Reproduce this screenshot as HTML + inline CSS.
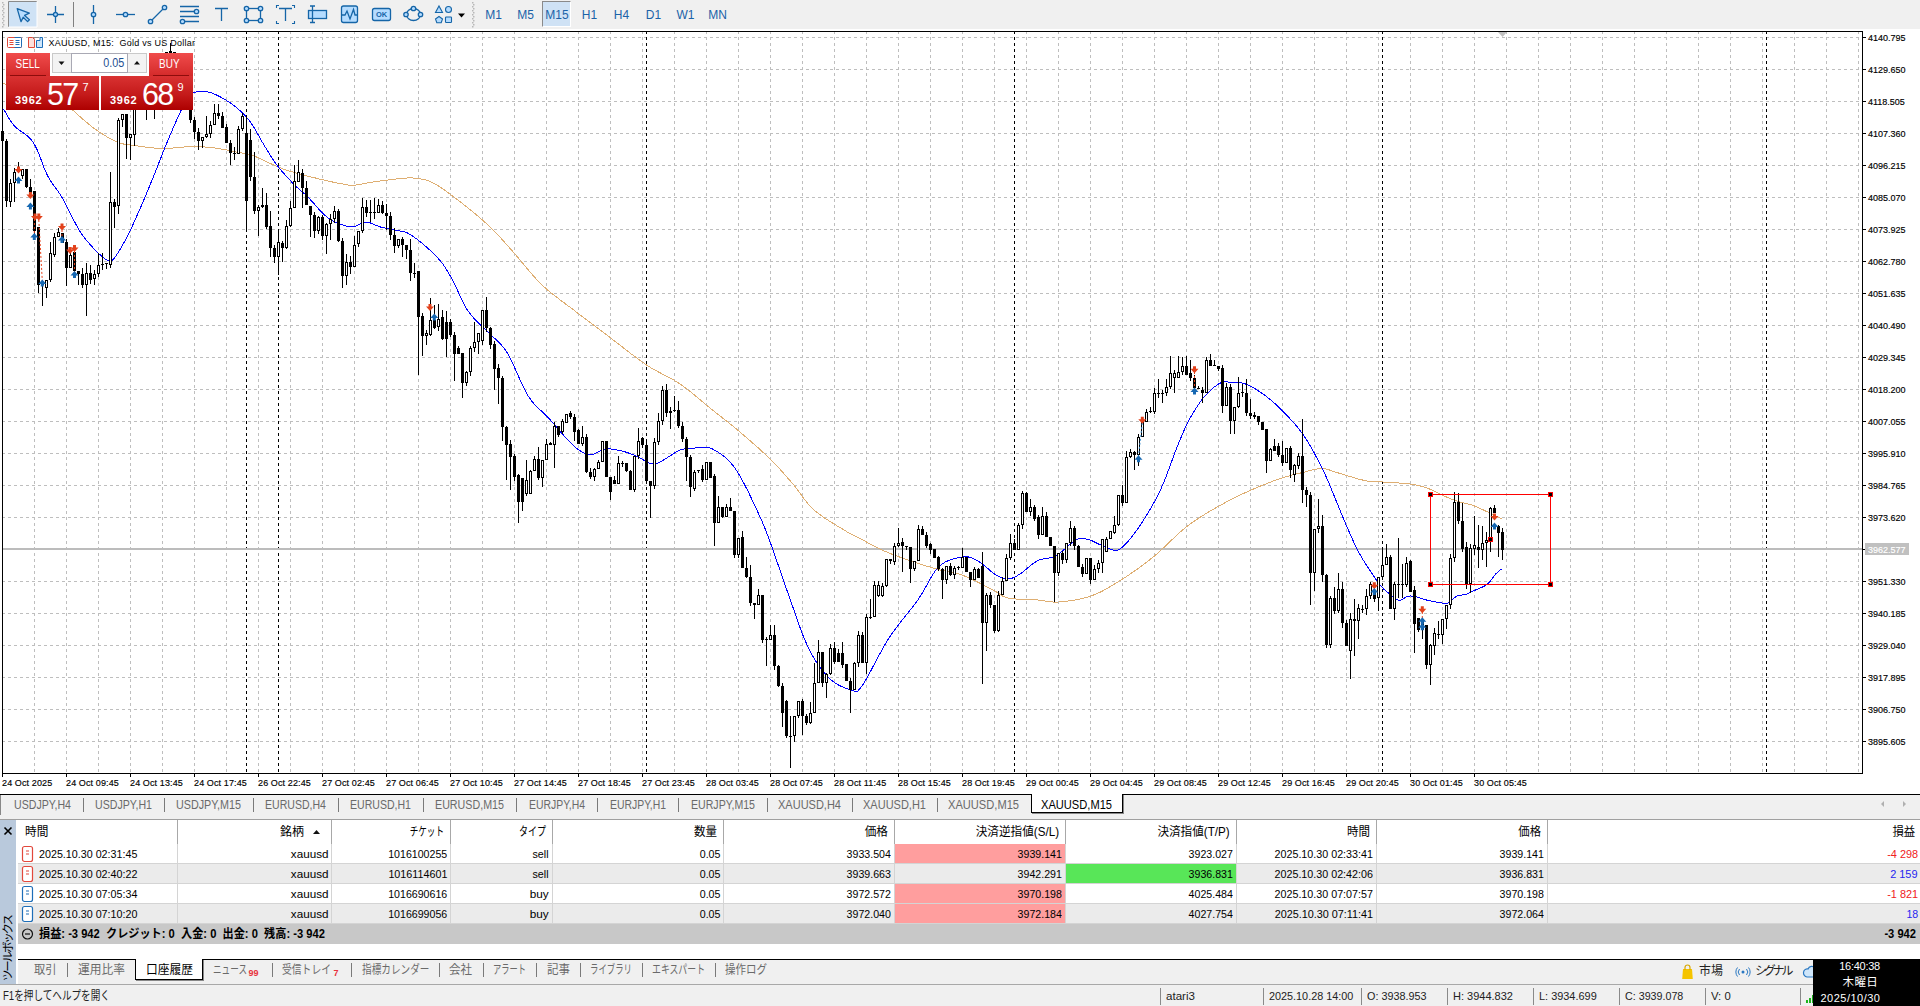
<!DOCTYPE html><html lang="ja"><head><meta charset="utf-8"><title>XAUUSD,M15</title><style>

*{box-sizing:border-box;margin:0;padding:0}
html,body{width:1920px;height:1006px;overflow:hidden;background:#f0f0f0}
body{position:relative;font-family:"Liberation Sans","Noto Sans CJK JP",sans-serif;font-size:12px;color:#000}
.abs{position:absolute}
.t{position:absolute;white-space:nowrap;line-height:1}
#toolbar{position:absolute;left:0;top:0;width:1920px;height:29px;background:#f0f0f0}
.tf{position:absolute;top:0;height:30px;line-height:31px;font-size:12px;color:#1b62a8;text-align:center;width:32px}
/* one click panel */
#oct{position:absolute;left:0;top:0}
.redtop{position:absolute;background:linear-gradient(#f04c4c,#d42a2a);color:#fff;font-size:12px;text-align:center}
.redbot{position:absolute;background:linear-gradient(#d93232,#c41a1a 55%,#ad0000);color:#fff}
/* chart tabs */
#ctabs{position:absolute;left:0;top:795px;width:1920px;height:24px;background:#f0f0f0}
.ct{position:absolute;top:0;height:19px;line-height:20px;font-size:12px;color:#6a6a6a;white-space:nowrap;transform-origin:left center}
.sep{position:absolute;width:1px;background:#7a7a7a}
/* terminal */
#term{position:absolute;left:0;top:819px;width:1920px;height:166px;background:#fff;border-top:1px solid #a0a0a0}
#side{position:absolute;left:0;top:0;width:16px;height:165px;background:#b9c9dc}
.row{position:absolute;left:18px;width:1902px;height:20px}
.cell{position:absolute;top:0;height:19px;line-height:21.5px;font-size:11px;white-space:nowrap;text-align:right;padding-right:3px;border-right:1px solid #d4d4d4}
.cell span{display:inline-block;transform:scaleX(.968);transform-origin:right center}
.hcell{position:absolute;top:0;height:24px;line-height:25px;font-size:12px;white-space:nowrap;text-align:right;padding-right:6px;border-right:1px solid #a8a8a8}
.btab{position:absolute;top:0;height:20px;line-height:20px;font-size:12px;color:#6a6a6a;white-space:nowrap}
#status{position:absolute;left:0;top:984px;width:1920px;height:22px;background:#f0f0f0;border-top:1px solid #a8a8a8}
.st{position:absolute;top:0;height:21px;line-height:23px;font-size:11px;white-space:nowrap;color:#222;transform:scaleX(.98);transform-origin:left center}

</style></head><body>
<svg id="chart" width="1920" height="795" viewBox="0 0 1920 795" style="position:absolute;left:0;top:0">
<rect x="0" y="29" width="1920" height="766" fill="#fff"/>
<path d="M2 37.5H1862M2 69.5H1862M2 101.5H1862M2 133.5H1862M2 165.5H1862M2 197.5H1862M2 229.5H1862M2 261.5H1862M2 293.5H1862M2 325.5H1862M2 357.5H1862M2 389.5H1862M2 421.5H1862M2 453.5H1862M2 485.5H1862M2 517.5H1862M2 549.5H1862M2 581.5H1862M2 613.5H1862M2 645.5H1862M2 677.5H1862M2 709.5H1862M2 741.5H1862" stroke="#bebebe" stroke-width="1" stroke-dasharray="3 3" fill="none" shape-rendering="crispEdges"/>
<path d="M34.5 31V773M66.5 31V773M98.5 31V773M130.5 31V773M162.5 31V773M194.5 31V773M226.5 31V773M258.5 31V773M290.5 31V773M322.5 31V773M354.5 31V773M386.5 31V773M418.5 31V773M450.5 31V773M482.5 31V773M514.5 31V773M546.5 31V773M578.5 31V773M610.5 31V773M642.5 31V773M674.5 31V773M706.5 31V773M738.5 31V773M770.5 31V773M802.5 31V773M834.5 31V773M866.5 31V773M898.5 31V773M930.5 31V773M962.5 31V773M994.5 31V773M1026.5 31V773M1058.5 31V773M1090.5 31V773M1122.5 31V773M1154.5 31V773M1186.5 31V773M1218.5 31V773M1250.5 31V773M1282.5 31V773M1314.5 31V773M1346.5 31V773M1378.5 31V773M1410.5 31V773M1442.5 31V773M1474.5 31V773M1506.5 31V773M1538.5 31V773M1570.5 31V773M1602.5 31V773M1634.5 31V773M1666.5 31V773M1698.5 31V773M1730.5 31V773M1762.5 31V773M1794.5 31V773M1826.5 31V773M1858.5 31V773" stroke="#bebebe" stroke-width="1" stroke-dasharray="3 3" fill="none" shape-rendering="crispEdges"/>
<path d="M246.5 31V773M278.5 31V773M646.5 31V773M1014.5 31V773M1382.5 31V773M1766.5 31V773" stroke="#000" stroke-width="1" stroke-dasharray="3 3" fill="none" shape-rendering="crispEdges"/>
<rect x="3" y="548" width="1859" height="2" fill="#bcbcbc" shape-rendering="crispEdges"/>
<path d="M2.0 83.0L3.8 83.5L6.0 84.2L8.7 84.9L11.6 85.7L14.8 86.6L18.3 87.6L21.8 88.6L25.4 89.7L29.1 90.8L32.6 91.8L36.1 92.9L39.3 94.0L42.3 95.0L45.0 96.0L48.8 97.6L52.5 99.2L56.0 101.0L59.4 102.7L62.5 104.5L65.3 106.1L67.9 107.6L70.1 108.9L72.0 110.0L74.5 111.5L76.0 113.3L78.3 115.3L81.3 117.8L84.7 120.8L88.3 123.8L92.0 126.8L95.5 129.4L98.5 131.5L101.6 133.5L104.8 135.5L108.0 137.4L111.1 139.2L114.2 140.7L117.0 142.0L120.5 143.3L123.5 144.0L126.4 144.5L129.7 144.9L133.7 145.4L136.3 145.8L139.2 146.2L142.2 146.6L145.4 147.1L148.7 147.5L152.1 147.8L155.4 148.2L158.8 148.4L162.0 148.5L165.2 148.5L168.5 148.4L171.8 148.1L175.1 147.8L178.4 147.5L181.7 147.2L184.9 146.9L188.0 146.7L191.0 146.6L194.7 146.6L198.2 146.7L201.6 146.8L204.9 147.0L208.1 147.3L211.4 147.6L214.8 148.0L218.3 148.5L221.9 149.1L225.5 149.8L229.1 150.5L232.6 151.2L235.8 151.9L238.7 152.5L242.7 153.2L245.9 153.7L249.0 154.3L253.0 155.6L256.0 156.8L259.3 158.3L262.9 159.9L266.6 161.7L270.2 163.4L273.7 165.0L276.8 166.4L280.4 167.9L283.5 169.1L286.4 170.1L289.6 171.1L293.6 172.3L296.2 173.1L299.1 173.9L302.3 174.7L305.5 175.5L308.8 176.4L312.1 177.2L315.4 178.0L318.5 178.8L321.5 179.5L325.2 180.4L328.9 181.2L332.5 182.0L336.0 182.7L339.2 183.4L342.2 183.9L344.7 184.4L348.4 185.1L350.6 185.4L353.7 185.3L356.5 184.9L359.7 184.4L363.3 183.7L367.2 182.9L371.6 182.2L374.4 181.8L377.4 181.4L380.7 180.9L384.2 180.5L387.7 180.0L391.1 179.6L394.3 179.2L397.3 178.9L400.0 178.6L404.0 178.3L407.3 178.0L410.2 177.9L413.0 178.0L416.0 178.3L419.2 178.7L422.4 179.3L425.6 180.0L428.9 181.1L432.4 182.6L435.4 184.2L438.4 186.0L441.5 188.0L444.8 190.3L448.3 192.8L452.0 195.6L454.7 197.6L457.7 199.9L460.8 202.3L464.0 204.8L467.2 207.3L470.4 209.9L473.5 212.4L476.4 214.8L479.0 217.0L482.5 220.1L485.7 222.9L488.6 225.6L491.3 228.3L494.1 231.1L497.0 234.0L500.4 237.6L503.6 241.1L506.9 244.9L510.6 249.0L514.8 253.8L517.4 256.8L520.2 260.2L523.1 263.7L526.2 267.4L529.4 271.2L532.6 275.0L536.0 278.7L539.5 282.3L543.0 285.8L545.7 288.3L548.6 290.8L551.6 293.3L554.7 295.7L557.8 298.1L560.9 300.5L564.1 302.8L567.2 305.2L570.3 307.4L573.3 309.7L576.2 311.9L579.0 314.0L582.5 316.7L585.9 319.3L589.1 321.7L592.2 324.1L595.3 326.4L598.4 328.8L601.7 331.2L605.1 333.8L608.7 336.5L611.6 338.7L614.6 341.0L617.6 343.4L620.8 345.8L624.0 348.3L627.3 350.9L630.5 353.4L633.8 355.8L637.0 358.2L640.2 360.5L643.3 362.7L646.3 364.8L649.5 366.9L652.7 368.8L655.9 370.6L659.0 372.2L662.1 373.9L665.2 375.5L668.2 377.0L671.2 378.7L674.2 380.3L677.1 382.1L680.0 384.0L683.1 386.2L686.2 388.5L689.3 390.8L692.3 393.3L695.2 395.7L698.2 398.2L701.1 400.6L704.1 403.1L707.0 405.6L710.0 408.0L713.0 410.4L716.0 412.8L719.0 415.1L722.0 417.5L725.0 419.8L728.0 422.2L731.0 424.6L734.0 427.0L737.0 429.5L740.0 432.0L743.3 434.9L746.7 437.8L750.2 440.8L753.6 443.8L757.0 446.8L760.3 449.8L763.5 452.8L766.7 455.8L769.7 458.7L773.4 462.4L776.9 466.0L780.3 469.6L783.5 473.2L786.7 476.8L789.8 480.4L793.0 484.0L796.0 487.7L798.8 491.5L801.5 495.3L804.3 499.1L807.2 502.9L810.4 506.5L814.0 510.0L816.6 512.2L819.6 514.4L822.7 516.7L826.0 518.9L829.4 521.1L832.7 523.2L836.0 525.2L839.2 527.1L842.1 528.8L844.7 530.4L847.0 531.8L851.1 534.2L853.2 535.3L855.2 536.2L859.0 538.0L861.2 539.1L863.6 540.4L866.2 541.9L869.0 543.4L872.0 545.0L875.1 546.6L878.4 548.2L881.8 549.9L885.4 551.5L889.0 553.0L891.7 554.1L894.7 555.2L897.8 556.4L901.0 557.5L904.3 558.7L907.6 559.8L911.0 561.0L914.4 562.1L917.7 563.2L921.0 564.3L924.2 565.3L927.3 566.3L930.3 567.2L933.0 568.0L936.6 569.0L939.9 569.9L943.0 570.6L946.0 571.2L948.9 571.7L951.7 572.3L954.4 572.9L957.2 573.6L960.1 574.4L963.0 575.4L966.1 576.6L969.2 578.0L972.5 579.5L975.7 581.0L978.9 582.7L982.1 584.3L985.1 585.9L988.0 587.4L990.6 588.8L993.0 590.0L996.7 592.1L999.4 594.0L1001.6 595.5L1004.3 596.9L1008.0 598.0L1010.4 598.4L1013.2 598.8L1016.2 599.0L1019.4 599.2L1022.6 599.4L1026.0 599.5L1029.2 599.6L1032.4 599.7L1035.3 599.8L1038.0 600.0L1041.8 600.4L1045.1 601.0L1048.2 601.5L1051.2 601.9L1054.6 602.1L1058.6 602.0L1061.4 601.8L1064.4 601.5L1067.5 601.1L1070.8 600.7L1074.2 600.1L1077.6 599.5L1081.1 598.8L1084.5 598.0L1087.8 597.0L1091.0 596.0L1094.1 594.8L1097.1 593.6L1100.1 592.2L1103.0 590.7L1106.0 589.1L1108.9 587.4L1111.9 585.7L1114.9 583.8L1117.9 581.9L1121.0 580.0L1124.2 578.0L1127.4 575.9L1130.6 573.7L1133.9 571.5L1137.2 569.2L1140.5 566.8L1143.8 564.3L1147.1 561.8L1150.4 559.2L1153.7 556.6L1157.0 553.8L1160.3 550.9L1163.5 547.8L1166.8 544.7L1170.1 541.5L1173.4 538.4L1176.7 535.3L1180.0 532.3L1183.2 529.4L1186.5 526.8L1189.8 524.3L1193.1 522.0L1196.4 519.7L1199.6 517.6L1202.9 515.5L1206.2 513.5L1209.4 511.5L1212.7 509.6L1215.9 507.8L1219.0 506.0L1222.1 504.3L1225.2 502.6L1228.2 501.0L1231.2 499.4L1234.2 497.9L1237.1 496.5L1240.1 495.1L1243.0 493.7L1246.0 492.4L1249.0 491.0L1252.0 489.7L1255.1 488.3L1258.2 487.0L1261.3 485.7L1264.4 484.5L1267.5 483.3L1270.5 482.1L1273.4 481.0L1276.3 480.0L1279.0 479.0L1282.8 477.8L1286.4 476.7L1289.8 475.7L1293.2 474.8L1296.4 474.0L1299.6 473.2L1302.7 472.5L1306.2 471.6L1309.6 470.7L1312.8 469.9L1315.9 469.2L1319.0 468.7L1322.0 468.6L1325.3 468.9L1328.3 469.6L1331.3 470.6L1334.6 471.8L1338.5 473.0L1341.4 473.8L1344.6 474.8L1348.1 475.9L1351.7 477.0L1355.2 478.1L1358.7 479.1L1362.0 479.9L1365.0 480.6L1368.4 481.2L1371.3 481.5L1374.0 481.7L1376.6 481.7L1379.6 481.8L1383.0 482.0L1385.7 482.2L1388.6 482.4L1391.7 482.5L1394.9 482.7L1398.2 482.9L1401.4 483.2L1404.5 483.4L1407.4 483.7L1410.0 484.0L1414.1 484.6L1417.6 485.3L1420.8 486.1L1423.8 486.9L1427.0 488.0L1430.3 489.3L1433.5 490.8L1436.7 492.4L1439.9 494.0L1443.0 495.5L1446.1 496.8L1449.1 498.1L1452.0 499.3L1455.0 500.4L1458.0 501.4L1461.0 502.3L1464.0 503.0L1467.0 503.7L1470.0 504.5L1473.0 505.4L1476.7 506.9L1480.3 508.5L1484.0 510.3L1487.6 512.0L1491.6 513.9L1495.7 515.9L1499.4 517.7L1502.0 519.0" stroke="#deae72" stroke-width="1" fill="none" shape-rendering="crispEdges"/>
<path d="M3.6 109.0L6.1 113.4L9.7 119.6L14.3 125.8L17.1 128.4L20.2 130.8L23.6 133.1L27.1 135.7L30.4 138.7L33.4 142.5L37.3 150.0L40.8 159.0L44.2 168.1L47.7 176.0L51.2 181.9L54.6 186.6L58.1 191.3L62.0 197.4L64.9 202.7L68.0 208.7L71.2 215.2L74.5 221.6L77.8 227.7L81.0 233.0L84.3 237.6L87.7 241.8L91.1 245.7L94.4 249.2L97.4 252.2L100.0 254.7L105.1 259.2L108.6 260.6L111.2 261.2L114.5 258.0L117.4 253.7L120.9 248.0L124.9 241.0L129.0 233.0L131.9 226.9L135.0 220.2L138.2 212.9L141.5 205.3L144.8 197.6L148.0 190.0L151.2 182.1L154.6 173.8L157.9 165.4L161.1 157.2L164.2 149.4L167.0 142.5L170.8 133.5L174.2 125.6L177.2 118.7L180.0 112.7L184.3 103.3L188.0 97.0L191.5 93.5L195.7 92.0L198.7 91.5L202.1 91.3L205.9 91.5L210.0 92.4L212.9 93.4L216.2 94.8L219.5 96.5L222.8 98.3L226.0 100.2L229.0 102.0L233.0 104.8L236.8 107.8L240.2 110.9L243.4 113.9L247.0 117.7L250.0 121.5L253.0 125.8L256.0 130.8L259.0 136.3L262.5 142.5L265.7 147.8L269.2 153.6L272.9 159.5L276.8 165.0L280.0 169.1L283.5 173.1L286.9 177.0L290.4 180.6L293.6 184.0L297.2 187.5L300.6 190.4L304.1 193.4L307.9 197.0L310.8 200.1L314.0 203.6L317.2 207.3L320.5 211.0L323.8 214.3L326.8 217.0L330.3 219.5L333.7 221.4L337.0 222.8L340.2 224.0L343.0 225.0L346.9 226.2L350.2 226.8L353.7 226.6L356.6 225.7L359.6 224.1L362.7 222.6L366.0 222.0L369.4 222.6L373.0 224.0L376.7 225.6L380.5 227.0L383.7 227.8L387.1 228.6L390.5 229.2L393.7 229.9L396.6 230.5L400.5 231.1L403.7 231.6L407.4 233.0L410.6 234.8L414.1 237.1L417.8 239.8L421.7 243.0L425.1 245.9L428.9 249.2L432.7 252.7L436.3 256.4L439.6 260.0L443.1 264.4L446.1 268.9L449.0 273.7L452.0 279.0L455.2 285.4L458.5 292.6L461.7 299.7L464.7 305.7L468.3 311.4L471.7 315.8L475.4 320.0L478.6 323.3L481.9 326.4L485.5 329.7L489.4 333.5L492.7 336.6L496.1 339.7L499.7 343.2L503.5 347.4L507.3 352.9L510.6 359.0L514.0 366.3L517.6 374.3L521.1 382.3L524.7 389.7L528.2 396.0L531.7 401.0L535.2 405.1L538.8 408.7L542.3 411.9L545.7 415.1L549.0 418.5L552.2 422.1L555.4 425.8L558.5 429.5L561.5 432.9L564.4 436.2L567.0 439.0L570.4 442.6L573.4 445.5L576.2 447.9L579.0 450.0L582.8 452.5L586.6 454.2L590.8 454.8L594.3 453.9L598.1 452.1L601.9 450.2L605.7 449.0L609.4 448.8L613.2 449.2L616.9 449.9L620.6 450.7L624.3 451.6L627.9 452.8L631.6 454.1L635.5 455.7L638.9 457.4L642.6 459.5L646.3 461.6L650.0 463.3L653.4 464.0L657.4 463.3L661.2 461.5L664.9 459.1L668.3 457.0L672.3 454.5L676.0 452.0L680.0 450.0L682.8 449.2L685.8 448.7L688.8 448.4L691.9 448.2L695.0 448.0L698.0 447.7L700.9 447.3L703.8 447.0L706.8 447.2L710.0 448.0L712.9 449.2L716.0 450.9L719.1 452.9L722.3 455.1L725.3 457.5L728.0 460.0L731.5 463.7L734.6 467.6L737.6 472.2L741.0 478.0L744.2 483.9L747.7 490.7L751.3 498.1L754.7 505.3L757.8 512.0L761.7 520.6L765.1 528.6L769.4 540.0L772.3 548.2L775.7 557.8L779.3 568.2L783.0 579.0L786.6 589.4L790.0 599.0L793.1 607.8L796.1 616.4L799.0 624.8L801.9 632.7L804.9 640.1L808.0 647.0L810.8 652.5L813.7 657.7L816.7 662.5L819.7 666.9L822.8 671.0L825.9 674.7L829.0 678.0L832.2 680.9L835.6 683.3L839.1 685.3L842.6 687.0L845.8 688.3L848.8 689.3L851.4 690.0L855.2 691.5L857.7 691.2L862.0 686.0L864.3 682.5L866.8 678.1L869.7 672.9L872.7 667.2L875.9 661.1L879.2 655.0L882.5 648.9L885.8 643.2L889.0 638.0L892.2 633.2L895.6 628.6L899.0 624.1L902.4 619.7L905.9 615.4L909.2 611.2L912.5 607.1L915.6 603.0L918.5 599.0L922.4 592.9L925.9 586.8L929.1 580.9L932.2 575.4L935.5 570.5L939.0 566.5L941.9 564.1L945.0 562.2L948.1 560.7L951.3 559.5L954.5 558.6L957.6 557.9L960.4 557.4L963.0 557.0L966.5 556.8L969.5 557.1L972.2 558.0L975.0 559.3L978.0 561.0L980.9 562.9L984.0 565.3L987.2 568.0L990.3 570.7L993.3 573.1L996.0 575.0L999.4 576.9L1002.4 578.2L1005.1 578.9L1008.0 579.0L1010.9 578.6L1013.6 577.6L1016.6 576.1L1020.0 574.0L1022.7 572.1L1025.6 569.8L1028.6 567.2L1031.8 564.6L1035.0 562.3L1038.0 560.5L1041.5 559.2L1044.9 558.6L1048.3 558.2L1051.9 557.5L1055.6 556.0L1059.0 553.8L1062.7 550.8L1066.4 547.5L1070.1 544.3L1073.5 541.5L1076.5 539.6L1080.1 538.3L1083.1 538.3L1085.7 538.9L1088.5 539.6L1092.3 540.9L1096.0 542.8L1100.0 544.7L1103.3 546.2L1106.9 547.8L1110.3 549.2L1113.4 550.0L1117.5 550.4L1122.0 547.6L1124.8 544.9L1128.0 541.4L1131.5 537.2L1135.2 532.4L1139.0 527.0L1141.8 522.7L1144.8 518.1L1147.9 513.1L1151.0 507.9L1154.1 502.4L1157.1 496.7L1160.0 491.0L1163.8 482.3L1167.5 472.8L1171.1 463.1L1174.4 454.0L1177.5 446.0L1181.8 435.6L1185.4 427.3L1189.4 419.4L1192.9 413.3L1196.5 407.4L1200.3 401.9L1204.0 397.0L1207.1 393.6L1210.3 390.5L1213.4 387.7L1216.4 385.5L1219.0 383.7L1222.2 382.1L1224.7 381.9L1228.0 382.0L1230.8 382.0L1234.1 382.1L1237.6 382.3L1241.2 382.8L1244.6 383.7L1247.9 384.9L1251.1 386.5L1254.3 388.3L1257.6 390.3L1261.0 392.6L1263.8 394.6L1266.7 396.7L1269.5 399.0L1272.5 401.5L1275.7 404.3L1279.0 407.5L1282.1 410.6L1285.5 414.0L1289.0 417.7L1292.6 421.5L1296.1 425.5L1299.5 429.7L1302.7 434.0L1306.2 439.3L1309.7 444.9L1313.0 450.7L1316.1 456.6L1319.2 462.4L1322.0 468.0L1325.9 476.2L1329.4 484.3L1332.6 492.1L1335.7 499.7L1339.6 509.2L1343.3 518.2L1347.0 527.0L1350.9 535.7L1354.7 544.2L1358.6 552.0L1362.4 558.8L1366.2 564.8L1370.0 570.6L1373.9 576.4L1377.8 582.0L1381.4 586.6L1384.6 589.9L1387.6 592.4L1390.6 594.6L1393.7 597.2L1396.8 599.5L1399.7 600.7L1403.2 598.9L1406.6 596.4L1410.5 596.0L1414.6 596.4L1418.3 597.5L1422.6 599.0L1425.6 599.8L1429.1 600.6L1432.6 601.4L1436.0 602.0L1440.1 602.8L1444.0 603.3L1447.7 603.0L1451.0 601.1L1453.9 598.2L1456.9 596.0L1460.1 595.2L1463.3 594.9L1466.0 594.6L1467.9 593.7L1470.6 592.0L1473.2 590.9L1476.5 589.6L1480.1 588.1L1483.7 586.5L1486.6 584.7L1490.3 581.2L1493.2 577.3L1495.7 574.0L1499.1 570.8L1501.4 569.0" stroke="#0000ff" stroke-width="1" fill="none" shape-rendering="crispEdges"/>
<g shape-rendering="crispEdges"><path d="M2 130h1v11h-1zM1 131h3v10h-3zM6 139h1v68h-1zM5 141h3v60h-3zM10 179h1v28h-1zM9 183h3v19h-3zM14 168h1v34h-1zM13 172h3v11h-3zM18 162h1v10h-1zM17 169h3v3h-3zM22 169h1v10h-1zM21 169h3v7h-3zM26 169h1v19h-1zM25 169h3v18h-3zM30 179h1v17h-1zM29 187h3v6h-3zM34 191h1v43h-1zM33 191h3v40h-3zM38 227h1v66h-1zM37 227h3v58h-3zM42 284h1v22h-1zM41 284h3v1h-3zM46 280h1v18h-1zM45 280h3v8h-3zM50 242h1v40h-1zM49 253h3v27h-3zM54 233h1v24h-1zM53 237h3v18h-3zM58 228h1v9h-1zM57 232h3v5h-3zM62 233h1v10h-1zM61 233h3v10h-3zM66 239h1v47h-1zM65 242h3v26h-3zM70 253h1v15h-1zM69 255h3v13h-3zM74 249h1v22h-1zM73 252h3v19h-3zM78 271h1v14h-1zM77 271h3v3h-3zM82 268h1v20h-1zM81 274h3v11h-3zM86 263h1v53h-1zM85 273h3v12h-3zM90 265h1v19h-1zM89 273h3v7h-3zM94 270h1v15h-1zM93 274h3v5h-3zM98 253h1v24h-1zM97 265h3v9h-3zM102 253h1v17h-1zM101 264h3v1h-3zM106 263h1v6h-1zM105 263h3v1h-3zM110 172h1v96h-1zM109 202h3v63h-3zM114 199h1v29h-1zM113 202h3v5h-3zM118 118h1v96h-1zM117 120h3v86h-3zM122 114h1v13h-1zM121 114h3v6h-3zM126 114h1v45h-1zM125 114h3v24h-3zM130 134h1v26h-1zM129 134h3v4h-3zM134 97h1v49h-1zM133 100h3v35h-3zM138 90h1v10h-1zM137 90h3v10h-3zM142 88h1v11h-1zM141 88h3v10h-3zM146 92h1v28h-1zM145 92h3v8h-3zM150 80h1v17h-1zM149 80h3v15h-3zM154 82h1v37h-1zM153 82h3v14h-3zM158 65h1v20h-1zM157 65h3v20h-3zM162 56h1v15h-1zM161 56h3v12h-3zM166 52h1v6h-1zM165 52h3v6h-3zM170 43h1v20h-1zM169 51h3v9h-3zM174 52h1v19h-1zM173 52h3v18h-3zM178 68h1v15h-1zM177 68h3v12h-3zM182 78h1v16h-1zM181 78h3v12h-3zM186 88h1v14h-1zM185 88h3v14h-3zM190 102h1v21h-1zM189 102h3v18h-3zM194 117h1v22h-1zM193 120h3v12h-3zM198 128h1v22h-1zM197 132h3v9h-3zM202 137h1v11h-1zM201 137h3v4h-3zM206 116h1v22h-1zM205 134h3v3h-3zM210 121h1v17h-1zM209 125h3v9h-3zM214 104h1v21h-1zM213 113h3v12h-3zM218 104h1v15h-1zM217 113h3v3h-3zM222 112h1v16h-1zM221 116h3v12h-3zM226 124h1v19h-1zM225 127h3v16h-3zM230 140h1v25h-1zM229 143h3v10h-3zM234 147h1v13h-1zM233 153h3v1h-3zM238 126h1v28h-1zM237 129h3v25h-3zM242 113h1v18h-1zM241 116h3v13h-3zM246 116h1v115h-1zM245 133h3v68h-3zM250 129h1v52h-1zM249 140h3v37h-3zM254 152h1v62h-1zM253 177h3v34h-3zM258 205h1v31h-1zM257 207h3v4h-3zM262 188h1v20h-1zM261 205h3v2h-3zM266 193h1v36h-1zM265 205h3v22h-3zM270 211h1v46h-1zM269 226h3v22h-3zM274 245h1v18h-1zM273 248h3v9h-3zM278 231h1v44h-1zM277 242h3v15h-3zM282 241h1v21h-1zM281 243h3v5h-3zM286 220h1v29h-1zM285 226h3v22h-3zM290 201h1v26h-1zM289 208h3v18h-3zM294 165h1v43h-1zM293 181h3v27h-3zM298 160h1v22h-1zM297 172h3v10h-3zM302 169h1v39h-1zM301 173h3v15h-3zM306 181h1v24h-1zM305 188h3v17h-3zM310 206h1v31h-1zM309 206h3v9h-3zM314 212h1v26h-1zM313 215h3v16h-3zM318 216h1v18h-1zM317 217h3v14h-3zM322 215h1v25h-1zM321 217h3v19h-3zM326 223h1v31h-1zM325 224h3v12h-3zM330 214h1v26h-1zM329 219h3v5h-3zM334 206h1v17h-1zM333 211h3v8h-3zM338 209h1v33h-1zM337 211h3v30h-3zM342 238h1v50h-1zM341 241h3v35h-3zM346 254h1v31h-1zM345 262h3v14h-3zM350 256h1v18h-1zM349 262h3v5h-3zM354 236h1v31h-1zM353 245h3v22h-3zM358 231h1v16h-1zM357 231h3v13h-3zM362 198h1v35h-1zM361 207h3v24h-3zM366 200h1v17h-1zM365 207h3v6h-3zM370 200h1v22h-1zM369 212h3v1h-3zM374 198h1v21h-1zM373 212h3v1h-3zM378 199h1v14h-1zM377 205h3v8h-3zM382 201h1v13h-1zM381 205h3v8h-3zM386 204h1v26h-1zM385 213h3v3h-3zM390 212h1v28h-1zM389 216h3v19h-3zM394 228h1v25h-1zM393 235h3v11h-3zM398 239h1v9h-1zM397 239h3v7h-3zM402 237h1v20h-1zM401 239h3v6h-3zM406 245h1v14h-1zM405 245h3v5h-3zM410 239h1v42h-1zM409 250h3v23h-3zM414 263h1v15h-1zM413 273h3v1h-3zM418 271h1v104h-1zM417 271h3v46h-3zM422 313h1v43h-1zM421 316h3v20h-3zM426 330h1v15h-1zM425 333h3v3h-3zM430 298h1v38h-1zM429 320h3v15h-3zM434 305h1v24h-1zM433 320h3v8h-3zM438 304h1v27h-1zM437 319h3v8h-3zM442 310h1v30h-1zM441 317h3v22h-3zM446 311h1v46h-1zM445 322h3v17h-3zM450 319h1v18h-1zM449 322h3v13h-3zM454 332h1v49h-1zM453 335h3v19h-3zM458 346h1v8h-1zM457 348h3v6h-3zM462 353h1v45h-1zM461 353h3v30h-3zM466 371h1v15h-1zM465 372h3v11h-3zM470 346h1v30h-1zM469 348h3v24h-3zM474 322h1v30h-1zM473 342h3v6h-3zM478 333h1v21h-1zM477 333h3v9h-3zM482 310h1v35h-1zM481 310h3v31h-3zM486 297h1v35h-1zM485 310h3v18h-3zM490 327h1v22h-1zM489 328h3v17h-3zM494 341h1v49h-1zM493 344h3v25h-3zM498 364h1v40h-1zM497 368h3v10h-3zM502 376h1v65h-1zM501 378h3v49h-3zM506 426h1v54h-1zM505 427h3v18h-3zM510 440h1v50h-1zM509 444h3v13h-3zM514 454h1v27h-1zM513 456h3v21h-3zM518 474h1v49h-1zM517 475h3v27h-3zM522 478h1v33h-1zM521 478h3v24h-3zM526 460h1v36h-1zM525 480h3v14h-3zM530 470h1v24h-1zM529 471h3v23h-3zM534 456h1v15h-1zM533 459h3v12h-3zM538 447h1v33h-1zM537 459h3v19h-3zM542 460h1v27h-1zM541 460h3v18h-3zM546 439h1v21h-1zM545 444h3v16h-3zM550 442h1v3h-1zM549 443h3v2h-3zM554 422h1v46h-1zM553 426h3v19h-3zM558 426h1v11h-1zM557 426h3v9h-3zM562 419h1v15h-1zM561 421h3v11h-3zM566 414h1v9h-1zM565 414h3v9h-3zM570 411h1v8h-1zM569 413h3v4h-3zM574 414h1v27h-1zM573 417h3v15h-3zM578 429h1v15h-1zM577 430h3v14h-3zM582 426h1v20h-1zM581 437h3v7h-3zM586 434h1v39h-1zM585 437h3v35h-3zM590 468h1v11h-1zM589 472h3v5h-3zM594 468h1v13h-1zM593 469h3v8h-3zM598 460h1v9h-1zM597 462h3v7h-3zM602 441h1v21h-1zM601 441h3v21h-3zM606 441h1v36h-1zM605 441h3v36h-3zM610 477h1v23h-1zM609 477h3v15h-3zM614 476h1v8h-1zM613 480h3v4h-3zM618 456h1v28h-1zM617 463h3v21h-3zM622 461h1v6h-1zM621 463h3v1h-3zM626 463h1v9h-1zM625 463h3v8h-3zM630 470h1v20h-1zM629 471h3v19h-3zM634 456h1v36h-1zM633 456h3v34h-3zM638 428h1v31h-1zM637 441h3v15h-3zM642 437h1v11h-1zM641 438h3v7h-3zM646 442h1v40h-1zM645 445h3v36h-3zM650 481h1v37h-1zM649 481h3v5h-3zM654 438h1v51h-1zM653 442h3v44h-3zM658 413h1v32h-1zM657 421h3v21h-3zM662 386h1v39h-1zM661 390h3v31h-3zM666 384h1v33h-1zM665 390h3v23h-3zM670 407h1v22h-1zM669 411h3v2h-3zM674 396h1v16h-1zM673 410h3v1h-3zM678 401h1v27h-1zM677 410h3v16h-3zM682 422h1v20h-1zM681 426h3v13h-3zM686 437h1v44h-1zM685 439h3v18h-3zM690 455h1v42h-1zM689 457h3v30h-3zM694 470h1v21h-1zM693 472h3v17h-3zM698 470h1v3h-1zM697 470h3v1h-3zM702 465h1v17h-1zM701 469h3v11h-3zM706 462h1v18h-1zM705 462h3v18h-3zM710 462h1v16h-1zM709 462h3v16h-3zM714 474h1v72h-1zM713 476h3v47h-3zM718 496h1v27h-1zM717 507h3v16h-3zM722 507h1v11h-1zM721 507h3v10h-3zM726 504h1v13h-1zM725 507h3v10h-3zM730 498h1v13h-1zM729 507h3v4h-3zM734 511h1v47h-1zM733 511h3v44h-3zM738 538h1v20h-1zM737 538h3v17h-3zM742 531h1v37h-1zM741 537h3v31h-3zM746 557h1v21h-1zM745 568h3v9h-3zM750 565h1v41h-1zM749 577h3v26h-3zM754 603h1v16h-1zM753 603h3v2h-3zM758 589h1v16h-1zM757 595h3v10h-3zM762 595h1v48h-1zM761 595h3v45h-3zM766 637h1v29h-1zM765 639h3v1h-3zM770 625h1v15h-1zM769 635h3v5h-3zM774 625h1v45h-1zM773 635h3v31h-3zM778 665h1v22h-1zM777 666h3v20h-3zM782 683h1v44h-1zM781 686h3v27h-3zM786 700h1v38h-1zM785 701h3v35h-3zM790 716h1v52h-1zM789 736h3v1h-3zM794 716h1v26h-1zM793 716h3v20h-3zM798 701h1v17h-1zM797 701h3v15h-3zM802 699h1v36h-1zM801 701h3v15h-3zM806 714h1v11h-1zM805 716h3v7h-3zM810 702h1v22h-1zM809 713h3v10h-3zM814 663h1v50h-1zM813 683h3v30h-3zM818 640h1v43h-1zM817 652h3v31h-3zM822 652h1v35h-1zM821 652h3v31h-3zM826 673h1v25h-1zM825 674h3v9h-3zM830 644h1v31h-1zM829 648h3v26h-3zM834 642h1v22h-1zM833 648h3v14h-3zM838 649h1v13h-1zM837 653h3v9h-3zM842 642h1v26h-1zM841 653h3v12h-3zM846 664h1v17h-1zM845 664h3v17h-3zM850 678h1v35h-1zM849 681h3v9h-3zM854 662h1v28h-1zM853 663h3v27h-3zM858 631h1v36h-1zM857 635h3v28h-3zM862 632h1v31h-1zM861 635h3v28h-3zM866 614h1v60h-1zM865 617h3v46h-3zM870 599h1v20h-1zM869 617h3v1h-3zM874 581h1v36h-1zM873 585h3v32h-3zM878 581h1v16h-1zM877 585h3v11h-3zM882 583h1v14h-1zM881 586h3v10h-3zM886 559h1v28h-1zM885 559h3v27h-3zM890 559h1v5h-1zM889 559h3v2h-3zM894 543h1v22h-1zM893 546h3v16h-3zM898 528h1v19h-1zM897 543h3v3h-3zM902 538h1v34h-1zM901 542h3v4h-3zM906 546h1v4h-1zM905 546h3v1h-3zM910 547h1v36h-1zM909 547h3v22h-3zM914 561h1v10h-1zM913 561h3v8h-3zM918 525h1v36h-1zM917 529h3v32h-3zM922 526h1v9h-1zM921 529h3v6h-3zM926 532h1v16h-1zM925 535h3v11h-3zM930 543h1v11h-1zM929 544h3v6h-3zM934 549h1v9h-1zM933 549h3v9h-3zM938 556h1v15h-1zM937 557h3v12h-3zM942 568h1v31h-1zM941 569h3v11h-3zM946 566h1v18h-1zM945 566h3v14h-3zM950 563h1v13h-1zM949 566h3v9h-3zM954 566h1v13h-1zM953 568h3v7h-3zM958 566h1v4h-1zM957 567h3v1h-3zM962 548h1v20h-1zM961 557h3v11h-3zM966 557h1v15h-1zM965 557h3v15h-3zM970 572h1v15h-1zM969 572h3v8h-3zM974 567h1v13h-1zM973 569h3v11h-3zM978 568h1v10h-1zM977 569h3v9h-3zM982 552h1v132h-1zM981 566h3v57h-3zM986 593h1v58h-1zM985 595h3v28h-3zM990 592h1v16h-1zM989 595h3v10h-3zM994 605h1v28h-1zM993 605h3v26h-3zM998 591h1v41h-1zM997 595h3v36h-3zM1002 577h1v18h-1zM1001 581h3v14h-3zM1006 554h1v27h-1zM1005 558h3v23h-3zM1010 534h1v26h-1zM1009 543h3v15h-3zM1014 539h1v11h-1zM1013 543h3v7h-3zM1018 523h1v27h-1zM1017 525h3v25h-3zM1022 491h1v38h-1zM1021 493h3v32h-3zM1026 492h1v20h-1zM1025 493h3v19h-3zM1030 499h1v17h-1zM1029 507h3v5h-3zM1034 505h1v16h-1zM1033 507h3v12h-3zM1038 515h1v24h-1zM1037 517h3v18h-3zM1042 507h1v28h-1zM1041 516h3v19h-3zM1046 512h1v25h-1zM1045 516h3v21h-3zM1050 537h1v9h-1zM1049 537h3v9h-3zM1054 546h1v56h-1zM1053 546h3v27h-3zM1058 553h1v23h-1zM1057 553h3v20h-3zM1062 551h1v13h-1zM1061 553h3v7h-3zM1066 543h1v20h-1zM1065 543h3v17h-3zM1070 521h1v25h-1zM1069 528h3v15h-3zM1074 526h1v24h-1zM1073 528h3v18h-3zM1078 545h1v22h-1zM1077 546h3v21h-3zM1082 564h1v13h-1zM1081 567h3v7h-3zM1086 558h1v16h-1zM1085 558h3v16h-3zM1090 558h1v26h-1zM1089 558h3v22h-3zM1094 565h1v15h-1zM1093 569h3v11h-3zM1098 560h1v13h-1zM1097 563h3v6h-3zM1102 539h1v34h-1zM1101 539h3v24h-3zM1106 537h1v15h-1zM1105 539h3v13h-3zM1110 531h1v8h-1zM1109 531h3v8h-3zM1114 516h1v18h-1zM1113 525h3v8h-3zM1118 495h1v31h-1zM1117 495h3v30h-3zM1122 485h1v21h-1zM1121 495h3v8h-3zM1126 451h1v52h-1zM1125 457h3v46h-3zM1130 449h1v9h-1zM1129 452h3v5h-3zM1134 451h1v19h-1zM1133 452h3v3h-3zM1138 434h1v32h-1zM1137 437h3v18h-3zM1142 420h1v17h-1zM1141 422h3v15h-3zM1146 409h1v13h-1zM1145 412h3v10h-3zM1150 407h1v6h-1zM1149 411h3v1h-3zM1154 388h1v26h-1zM1153 393h3v19h-3zM1158 379h1v19h-1zM1157 393h3v1h-3zM1162 390h1v13h-1zM1161 393h3v1h-3zM1166 379h1v17h-1zM1165 387h3v6h-3zM1170 356h1v33h-1zM1169 373h3v14h-3zM1174 370h1v23h-1zM1173 373h3v5h-3zM1178 356h1v22h-1zM1177 372h3v6h-3zM1182 357h1v18h-1zM1181 366h3v6h-3zM1186 356h1v19h-1zM1185 366h3v9h-3zM1190 360h1v21h-1zM1189 373h3v5h-3zM1194 375h1v13h-1zM1193 378h3v10h-3zM1198 386h1v3h-1zM1197 388h3v1h-3zM1202 387h1v16h-1zM1201 390h3v3h-3zM1206 357h1v36h-1zM1205 360h3v33h-3zM1210 354h1v12h-1zM1209 360h3v6h-3zM1214 360h1v6h-1zM1213 365h3v1h-3zM1218 366h1v5h-1zM1217 366h3v3h-3zM1222 365h1v48h-1zM1221 368h3v38h-3zM1226 383h1v23h-1zM1225 387h3v19h-3zM1230 384h1v50h-1zM1229 387h3v34h-3zM1234 407h1v27h-1zM1233 407h3v14h-3zM1238 377h1v31h-1zM1237 393h3v14h-3zM1242 384h1v13h-1zM1241 392h3v1h-3zM1246 379h1v37h-1zM1245 393h3v20h-3zM1250 399h1v20h-1zM1249 413h3v3h-3zM1254 412h1v7h-1zM1253 415h3v2h-3zM1258 416h1v9h-1zM1257 416h3v6h-3zM1262 422h1v8h-1zM1261 422h3v8h-3zM1266 429h1v44h-1zM1265 429h3v32h-3zM1270 448h1v13h-1zM1269 449h3v12h-3zM1274 439h1v12h-1zM1273 446h3v5h-3zM1278 443h1v14h-1zM1277 446h3v9h-3zM1282 441h1v25h-1zM1281 455h3v8h-3zM1286 448h1v15h-1zM1285 448h3v15h-3zM1290 446h1v32h-1zM1289 448h3v22h-3zM1294 464h1v18h-1zM1293 465h3v10h-3zM1298 453h1v16h-1zM1297 456h3v10h-3zM1302 419h1v84h-1zM1301 456h3v34h-3zM1306 487h1v20h-1zM1305 490h3v5h-3zM1310 492h1v113h-1zM1309 495h3v78h-3zM1314 529h1v62h-1zM1313 529h3v44h-3zM1318 499h1v34h-1zM1317 526h3v3h-3zM1322 515h1v67h-1zM1321 526h3v49h-3zM1326 574h1v74h-1zM1325 575h3v70h-3zM1330 596h1v52h-1zM1329 598h3v47h-3zM1334 587h1v27h-1zM1333 598h3v13h-3zM1338 573h1v40h-1zM1337 589h3v22h-3zM1342 582h1v46h-1zM1341 589h3v34h-3zM1346 620h1v26h-1zM1345 623h3v23h-3zM1350 613h1v66h-1zM1349 619h3v32h-3zM1354 599h1v57h-1zM1353 619h3v2h-3zM1358 604h1v35h-1zM1357 608h3v13h-3zM1362 605h1v8h-1zM1361 609h3v1h-3zM1366 589h1v26h-1zM1365 596h3v13h-3zM1370 582h1v17h-1zM1369 584h3v12h-3zM1374 591h1v11h-1zM1373 592h3v7h-3zM1378 577h1v34h-1zM1377 577h3v21h-3zM1382 548h1v31h-1zM1381 565h3v12h-3zM1386 544h1v21h-1zM1385 557h3v8h-3zM1390 555h1v54h-1zM1389 557h3v52h-3zM1394 582h1v38h-1zM1393 584h3v25h-3zM1398 538h1v60h-1zM1397 584h3v1h-3zM1402 564h1v34h-1zM1401 584h3v1h-3zM1406 557h1v30h-1zM1405 563h3v22h-3zM1410 560h1v32h-1zM1409 561h3v31h-3zM1414 586h1v67h-1zM1413 590h3v34h-3zM1418 618h1v14h-1zM1417 618h3v12h-3zM1422 619h1v20h-1zM1421 619h3v11h-3zM1426 625h1v44h-1zM1425 625h3v40h-3zM1430 644h1v41h-1zM1429 645h3v20h-3zM1434 628h1v27h-1zM1433 633h3v13h-3zM1438 621h1v18h-1zM1437 634h3v1h-3zM1442 619h1v25h-1zM1441 619h3v16h-3zM1446 605h1v24h-1zM1445 605h3v14h-3zM1450 554h1v55h-1zM1449 558h3v47h-3zM1454 492h1v70h-1zM1453 502h3v56h-3zM1458 493h1v31h-1zM1457 502h3v19h-3zM1462 503h1v49h-1zM1461 521h3v28h-3zM1466 542h1v47h-1zM1465 547h3v37h-3zM1470 544h1v49h-1zM1469 548h3v36h-3zM1474 516h1v39h-1zM1473 545h3v4h-3zM1478 525h1v43h-1zM1477 547h3v3h-3zM1482 526h1v34h-1zM1481 543h3v7h-3zM1486 532h1v35h-1zM1485 540h3v3h-3zM1490 507h1v45h-1zM1489 508h3v31h-3zM1494 505h1v8h-1zM1493 508h3v5h-3zM1498 525h1v32h-1zM1497 526h3v7h-3zM1502 528h1v32h-1zM1501 532h3v18h-3z" fill="#000"/><path d="M10 184h1v17h-1zM14 173h1v9h-1zM18 170h1v1h-1zM22 170h1v5h-1zM46 281h1v6h-1zM50 254h1v25h-1zM54 238h1v16h-1zM58 233h1v3h-1zM70 256h1v11h-1zM86 274h1v10h-1zM94 275h1v3h-1zM98 266h1v7h-1zM110 203h1v61h-1zM118 121h1v84h-1zM122 115h1v4h-1zM130 135h1v2h-1zM134 101h1v33h-1zM138 91h1v8h-1zM150 81h1v13h-1zM158 66h1v18h-1zM162 57h1v10h-1zM166 53h1v4h-1zM202 138h1v2h-1zM206 135h1v1h-1zM210 126h1v7h-1zM214 114h1v10h-1zM238 130h1v23h-1zM242 117h1v11h-1zM258 208h1v2h-1zM278 243h1v13h-1zM286 227h1v20h-1zM290 209h1v16h-1zM294 182h1v25h-1zM298 173h1v8h-1zM318 218h1v12h-1zM326 225h1v10h-1zM330 220h1v3h-1zM334 212h1v6h-1zM346 263h1v12h-1zM354 246h1v20h-1zM358 232h1v11h-1zM362 208h1v22h-1zM378 206h1v6h-1zM398 240h1v5h-1zM426 334h1v1h-1zM430 321h1v13h-1zM438 320h1v6h-1zM466 373h1v9h-1zM470 349h1v22h-1zM474 343h1v4h-1zM478 334h1v7h-1zM482 311h1v29h-1zM526 481h1v12h-1zM530 472h1v21h-1zM534 460h1v10h-1zM542 461h1v16h-1zM546 445h1v14h-1zM554 427h1v17h-1zM562 422h1v9h-1zM566 415h1v7h-1zM582 438h1v5h-1zM594 470h1v6h-1zM598 463h1v5h-1zM602 442h1v19h-1zM618 464h1v19h-1zM634 457h1v32h-1zM638 442h1v13h-1zM654 443h1v42h-1zM658 422h1v19h-1zM662 391h1v29h-1zM694 473h1v15h-1zM706 463h1v16h-1zM718 508h1v14h-1zM726 508h1v8h-1zM738 539h1v15h-1zM758 596h1v8h-1zM770 636h1v3h-1zM794 717h1v18h-1zM798 702h1v13h-1zM810 714h1v8h-1zM814 684h1v28h-1zM818 653h1v29h-1zM826 675h1v7h-1zM830 649h1v24h-1zM854 664h1v25h-1zM858 636h1v26h-1zM866 618h1v44h-1zM874 586h1v30h-1zM878 586h1v9h-1zM882 587h1v8h-1zM886 560h1v25h-1zM894 547h1v14h-1zM898 544h1v1h-1zM914 562h1v6h-1zM918 530h1v30h-1zM946 567h1v12h-1zM954 569h1v5h-1zM962 558h1v9h-1zM974 570h1v9h-1zM986 596h1v26h-1zM998 596h1v34h-1zM1002 582h1v12h-1zM1006 559h1v21h-1zM1010 544h1v13h-1zM1018 526h1v23h-1zM1022 494h1v30h-1zM1030 508h1v3h-1zM1042 517h1v17h-1zM1058 554h1v18h-1zM1066 544h1v15h-1zM1070 529h1v13h-1zM1086 559h1v14h-1zM1094 570h1v9h-1zM1098 564h1v4h-1zM1102 540h1v22h-1zM1106 540h1v11h-1zM1110 532h1v6h-1zM1114 526h1v6h-1zM1118 496h1v28h-1zM1126 458h1v44h-1zM1130 453h1v3h-1zM1138 438h1v16h-1zM1142 423h1v13h-1zM1146 413h1v8h-1zM1154 394h1v17h-1zM1166 388h1v4h-1zM1170 374h1v12h-1zM1174 374h1v3h-1zM1178 373h1v4h-1zM1182 367h1v4h-1zM1206 361h1v31h-1zM1226 388h1v17h-1zM1234 408h1v12h-1zM1238 394h1v12h-1zM1270 450h1v10h-1zM1286 449h1v13h-1zM1294 466h1v8h-1zM1298 457h1v8h-1zM1314 530h1v42h-1zM1318 527h1v1h-1zM1330 599h1v45h-1zM1338 590h1v20h-1zM1350 620h1v30h-1zM1358 609h1v11h-1zM1366 597h1v11h-1zM1370 585h1v10h-1zM1378 578h1v19h-1zM1382 566h1v10h-1zM1386 558h1v6h-1zM1394 585h1v23h-1zM1406 564h1v20h-1zM1430 646h1v18h-1zM1434 634h1v11h-1zM1442 620h1v14h-1zM1446 606h1v12h-1zM1450 559h1v45h-1zM1454 503h1v54h-1zM1470 549h1v34h-1zM1474 546h1v2h-1zM1482 544h1v5h-1zM1486 541h1v1h-1zM1490 509h1v29h-1z" fill="#fff"/></g>
<line x1="38.8" y1="220" x2="42.3" y2="281" stroke="#e8431c" stroke-width="1" stroke-dasharray="2 2"/>
<line x1="34.5" y1="219" x2="34.3" y2="234" stroke="#e8431c" stroke-width="1" stroke-dasharray="2 2"/>
<line x1="74.5" y1="251" x2="74.5" y2="272" stroke="#e8431c" stroke-width="1" stroke-dasharray="2 2"/>
<line x1="62" y1="230" x2="62" y2="237" stroke="#e8431c" stroke-width="1" stroke-dasharray="2 2"/>
<line x1="1142.3" y1="423" x2="1138.5" y2="456" stroke="#3a8fd0" stroke-width="1" stroke-dasharray="2 2"/>
<line x1="1194.5" y1="372" x2="1194.5" y2="389" stroke="#e8431c" stroke-width="1" stroke-dasharray="2 2"/>
<line x1="1422.3" y1="612" x2="1422.3" y2="619" stroke="#e8431c" stroke-width="1" stroke-dasharray="2 2"/>
<path d="M17.0 166.5h3v2.5h2.5l-4 4.5l-4 -4.5h2.5z" fill="#e2411b"/>
<path d="M17.0 183.5h3v-2.5h2.5l-4 -4.5l-4 4.5h2.5z" fill="#1668b2"/>
<path d="M28.9 192.0h3v2.5h2.5l-4 4.5l-4 -4.5h2.5z" fill="#e2411b"/>
<path d="M28.9 209.5h3v-2.5h2.5l-4 -4.5l-4 4.5h2.5z" fill="#1668b2"/>
<path d="M33.5 213.5h3v2.5h2.5l-4 4.5l-4 -4.5h2.5z" fill="#e2411b"/>
<path d="M37.3 213.5h3v2.5h2.5l-4 4.5l-4 -4.5h2.5z" fill="#e2411b"/>
<path d="M32.8 240.1h3v-2.5h2.5l-4 -4.5l-4 4.5h2.5z" fill="#1668b2"/>
<path d="M60.5 223.5h3v2.5h2.5l-4 4.5l-4 -4.5h2.5z" fill="#e2411b"/>
<path d="M60.5 243.1h3v-2.5h2.5l-4 -4.5l-4 4.5h2.5z" fill="#1668b2"/>
<path d="M73.0 245.0h3v2.5h2.5l-4 4.5l-4 -4.5h2.5z" fill="#e2411b"/>
<path d="M68.5 247.1h3v2.5h2.5l-4 4.5l-4 -4.5h2.5z" fill="#e2411b"/>
<path d="M73.0 278.0h3v-2.5h2.5l-4 -4.5l-4 4.5h2.5z" fill="#1668b2"/>
<path d="M40.8 286.5h3v-2.5h2.5l-4 -4.5l-4 4.5h2.5z" fill="#1668b2"/>
<path d="M428.5 304.0h3v2.5h2.5l-4 4.5l-4 -4.5h2.5z" fill="#e2411b"/>
<path d="M432.8 320.5h3v-2.5h2.5l-4 -4.5l-4 4.5h2.5z" fill="#1668b2"/>
<path d="M1140.8 416.8h3v2.5h2.5l-4 4.5l-4 -4.5h2.5z" fill="#e2411b"/>
<path d="M1137.0 462.3h3v-2.5h2.5l-4 -4.5l-4 4.5h2.5z" fill="#1668b2"/>
<path d="M1193.0 366.2h3v2.5h2.5l-4 4.5l-4 -4.5h2.5z" fill="#e2411b"/>
<path d="M1193.0 394.5h3v-2.5h2.5l-4 -4.5l-4 4.5h2.5z" fill="#1668b2"/>
<path d="M1372.8 582.3h3v2.5h2.5l-4 4.5l-4 -4.5h2.5z" fill="#e2411b"/>
<path d="M1372.8 595.0h3v-2.5h2.5l-4 -4.5l-4 4.5h2.5z" fill="#1668b2"/>
<path d="M1420.8 606.2h3v2.5h2.5l-4 4.5l-4 -4.5h2.5z" fill="#e2411b"/>
<path d="M1420.8 624.2h3v-2.5h2.5l-4 -4.5l-4 4.5h2.5z" fill="#1668b2"/>
<path d="M1420.8 630.2h3v-2.5h2.5l-4 -4.5l-4 4.5h2.5z" fill="#1668b2"/>
<path d="M1493.0 513.5h3v2.5h2.5l-4 4.5l-4 -4.5h2.5z" fill="#e2411b"/>
<path d="M1493.0 529.5h3v-2.5h2.5l-4 -4.5l-4 4.5h2.5z" fill="#1668b2"/>
<g shape-rendering="crispEdges">
<rect x="1430.5" y="494.5" width="120" height="90" fill="none" stroke="#ff0000" stroke-width="1"/>
<rect x="1428" y="492" width="5" height="5" fill="#ff0000"/><rect x="1429" y="493" width="3" height="3" fill="#000"/>
<rect x="1548" y="492" width="5" height="5" fill="#ff0000"/><rect x="1549" y="493" width="3" height="3" fill="#000"/>
<rect x="1428" y="582" width="5" height="5" fill="#ff0000"/><rect x="1429" y="583" width="3" height="3" fill="#000"/>
<rect x="1548" y="582" width="5" height="5" fill="#ff0000"/><rect x="1549" y="583" width="3" height="3" fill="#000"/>
<rect x="1488" y="537" width="5" height="5" fill="#ff0000"/><rect x="1489" y="538" width="3" height="3" fill="#000"/>
</g>
<path d="M1498 32h9l-4.5 5z" fill="#c0c0c0"/>
<g shape-rendering="crispEdges" fill="#000">
<rect x="2" y="31" width="1861" height="1"/>
<rect x="2" y="31" width="1" height="743"/>
<rect x="1862" y="31" width="1" height="743"/>
<rect x="2" y="773" width="1861" height="1"/>
<rect x="0" y="794" width="1920" height="1"/>
<rect x="1863" y="37" width="3" height="1"/>
<rect x="1863" y="69" width="3" height="1"/>
<rect x="1863" y="101" width="3" height="1"/>
<rect x="1863" y="133" width="3" height="1"/>
<rect x="1863" y="165" width="3" height="1"/>
<rect x="1863" y="197" width="3" height="1"/>
<rect x="1863" y="229" width="3" height="1"/>
<rect x="1863" y="261" width="3" height="1"/>
<rect x="1863" y="293" width="3" height="1"/>
<rect x="1863" y="325" width="3" height="1"/>
<rect x="1863" y="357" width="3" height="1"/>
<rect x="1863" y="389" width="3" height="1"/>
<rect x="1863" y="421" width="3" height="1"/>
<rect x="1863" y="453" width="3" height="1"/>
<rect x="1863" y="485" width="3" height="1"/>
<rect x="1863" y="517" width="3" height="1"/>
<rect x="1863" y="549" width="3" height="1"/>
<rect x="1863" y="581" width="3" height="1"/>
<rect x="1863" y="613" width="3" height="1"/>
<rect x="1863" y="645" width="3" height="1"/>
<rect x="1863" y="677" width="3" height="1"/>
<rect x="1863" y="709" width="3" height="1"/>
<rect x="1863" y="741" width="3" height="1"/>
<rect x="2" y="774" width="1" height="3"/>
<rect x="66" y="774" width="1" height="3"/>
<rect x="130" y="774" width="1" height="3"/>
<rect x="194" y="774" width="1" height="3"/>
<rect x="258" y="774" width="1" height="3"/>
<rect x="322" y="774" width="1" height="3"/>
<rect x="386" y="774" width="1" height="3"/>
<rect x="450" y="774" width="1" height="3"/>
<rect x="514" y="774" width="1" height="3"/>
<rect x="578" y="774" width="1" height="3"/>
<rect x="642" y="774" width="1" height="3"/>
<rect x="706" y="774" width="1" height="3"/>
<rect x="770" y="774" width="1" height="3"/>
<rect x="834" y="774" width="1" height="3"/>
<rect x="898" y="774" width="1" height="3"/>
<rect x="962" y="774" width="1" height="3"/>
<rect x="1026" y="774" width="1" height="3"/>
<rect x="1090" y="774" width="1" height="3"/>
<rect x="1154" y="774" width="1" height="3"/>
<rect x="1218" y="774" width="1" height="3"/>
<rect x="1282" y="774" width="1" height="3"/>
<rect x="1346" y="774" width="1" height="3"/>
<rect x="1410" y="774" width="1" height="3"/>
<rect x="1474" y="774" width="1" height="3"/>
</g>
<rect x="1865" y="543" width="44" height="12" fill="#c0c0c0" shape-rendering="crispEdges"/>
<g font-family="'Liberation Sans', sans-serif" font-size="9px" fill="#000" stroke="#000" stroke-width="0.15">
<text x="1868" y="41">4140.795</text>
<text x="1868" y="73">4129.650</text>
<text x="1868" y="105">4118.505</text>
<text x="1868" y="137">4107.360</text>
<text x="1868" y="169">4096.215</text>
<text x="1868" y="201">4085.070</text>
<text x="1868" y="233">4073.925</text>
<text x="1868" y="265">4062.780</text>
<text x="1868" y="297">4051.635</text>
<text x="1868" y="329">4040.490</text>
<text x="1868" y="361">4029.345</text>
<text x="1868" y="393">4018.200</text>
<text x="1868" y="425">4007.055</text>
<text x="1868" y="457">3995.910</text>
<text x="1868" y="489">3984.765</text>
<text x="1868" y="521">3973.620</text>
<text x="1868" y="585">3951.330</text>
<text x="1868" y="617">3940.185</text>
<text x="1868" y="649">3929.040</text>
<text x="1868" y="681">3917.895</text>
<text x="1868" y="713">3906.750</text>
<text x="1868" y="745">3895.605</text>
<text x="1868" y="553" fill="#fff" stroke="#fff">3962.577</text>
<text x="2" y="786" letter-spacing="0.12">24 Oct 2025</text>
<text x="66" y="786" letter-spacing="0.12">24 Oct 09:45</text>
<text x="130" y="786" letter-spacing="0.12">24 Oct 13:45</text>
<text x="194" y="786" letter-spacing="0.12">24 Oct 17:45</text>
<text x="258" y="786" letter-spacing="0.12">26 Oct 22:45</text>
<text x="322" y="786" letter-spacing="0.12">27 Oct 02:45</text>
<text x="386" y="786" letter-spacing="0.12">27 Oct 06:45</text>
<text x="450" y="786" letter-spacing="0.12">27 Oct 10:45</text>
<text x="514" y="786" letter-spacing="0.12">27 Oct 14:45</text>
<text x="578" y="786" letter-spacing="0.12">27 Oct 18:45</text>
<text x="642" y="786" letter-spacing="0.12">27 Oct 23:45</text>
<text x="706" y="786" letter-spacing="0.12">28 Oct 03:45</text>
<text x="770" y="786" letter-spacing="0.12">28 Oct 07:45</text>
<text x="834" y="786" letter-spacing="0.12">28 Oct 11:45</text>
<text x="898" y="786" letter-spacing="0.12">28 Oct 15:45</text>
<text x="962" y="786" letter-spacing="0.12">28 Oct 19:45</text>
<text x="1026" y="786" letter-spacing="0.12">29 Oct 00:45</text>
<text x="1090" y="786" letter-spacing="0.12">29 Oct 04:45</text>
<text x="1154" y="786" letter-spacing="0.12">29 Oct 08:45</text>
<text x="1218" y="786" letter-spacing="0.12">29 Oct 12:45</text>
<text x="1282" y="786" letter-spacing="0.12">29 Oct 16:45</text>
<text x="1346" y="786" letter-spacing="0.12">29 Oct 20:45</text>
<text x="1410" y="786" letter-spacing="0.12">30 Oct 01:45</text>
<text x="1474" y="786" letter-spacing="0.12">30 Oct 05:45</text>
<text x="48.5" y="46" xml:space="preserve" letter-spacing="0.25" stroke="none">XAUUSD, M15:  Gold vs US Dollar</text>
</g>
</svg>
<div id="toolbar"><svg width="480" height="30" viewBox="0 0 480 30" style="position:absolute;left:0;top:0" fill="none" stroke="#1565a7" stroke-width="1.3"><g stroke="none" fill="#b8b8b8"><rect x="2" y="2" width="1.5" height="1.5"/><rect x="3" y="4" width="1.5" height="1.5"/><rect x="2" y="6" width="1.5" height="1.5"/><rect x="3" y="8" width="1.5" height="1.5"/><rect x="2" y="10" width="1.5" height="1.5"/><rect x="3" y="12" width="1.5" height="1.5"/><rect x="2" y="14" width="1.5" height="1.5"/><rect x="3" y="16" width="1.5" height="1.5"/><rect x="2" y="18" width="1.5" height="1.5"/><rect x="3" y="20" width="1.5" height="1.5"/><rect x="2" y="22" width="1.5" height="1.5"/><rect x="3" y="24" width="1.5" height="1.5"/><rect x="2" y="26" width="1.5" height="1.5"/></g><g stroke="none" fill="#b8b8b8"><rect x="472" y="2" width="1.5" height="1.5"/><rect x="473" y="4" width="1.5" height="1.5"/><rect x="472" y="6" width="1.5" height="1.5"/><rect x="473" y="8" width="1.5" height="1.5"/><rect x="472" y="10" width="1.5" height="1.5"/><rect x="473" y="12" width="1.5" height="1.5"/><rect x="472" y="14" width="1.5" height="1.5"/><rect x="473" y="16" width="1.5" height="1.5"/><rect x="472" y="18" width="1.5" height="1.5"/><rect x="473" y="20" width="1.5" height="1.5"/><rect x="472" y="22" width="1.5" height="1.5"/><rect x="473" y="24" width="1.5" height="1.5"/><rect x="472" y="26" width="1.5" height="1.5"/></g><rect x="8" y="1" width="29" height="26" fill="#cfe2f5" stroke="none"/><path d="M8.5 27V1.5H37" stroke="#8a8a8a" stroke-width="1"/><path d="M8.5 27H37V1.5" stroke="#fff" stroke-width="1"/><path d="M17.2 8.6L29.3 13.2L24.6 15.4L29.4 19.8L27.6 21.6L23.2 17.2L21 21.6Z" fill="#b5dcff" stroke-linejoin="round"/><path d="M47 14.5H64M55.5 6V23"/><circle cx="55.5" cy="14.5" r="2" fill="#b5dcff"/><path d="M73.5 2V27" stroke="#808080" stroke-width="1"/><path d="M93.5 5V24"/><circle cx="93.5" cy="14.5" r="2.2" fill="#b5dcff"/><path d="M116 14.5H135"/><circle cx="125.5" cy="14.5" r="2.2" fill="#b5dcff"/><path d="M150.5 21.5L164.5 7.5"/><circle cx="150.5" cy="21.5" r="2.2" fill="#b5dcff"/><circle cx="164.5" cy="7.5" r="2.2" fill="#b5dcff"/><path d="M180 6.5H199M180 11.5H194M180 16.5H199M185 21.5H199"/><circle cx="196.5" cy="11.5" r="2.2" fill="#b5dcff"/><circle cx="182.5" cy="21.5" r="2.2" fill="#b5dcff"/><path d="M215 8.5H228M221.5 8.5V21"/><rect x="246.5" y="8.5" width="14" height="12"/><circle cx="246.5" cy="8.5" r="2.2" fill="#b5dcff"/><circle cx="246.5" cy="20.5" r="2.2" fill="#b5dcff"/><circle cx="260.5" cy="8.5" r="2.2" fill="#b5dcff"/><circle cx="260.5" cy="20.5" r="2.2" fill="#b5dcff"/><path d="M279 8.5H292M285.5 8.5V21"/><path d="M279 5.5H276.5V8M292 5.5H294.5V8M279 23.5H276.5V21M292 23.5H294.5V21" stroke-width="1.1"/><rect x="308.5" y="10.5" width="18" height="8" fill="#b5dcff"/><path d="M310 6H315M310 22.5H315M312.5 6V22.5"/><rect x="341.5" y="6" width="16" height="16.5" rx="2" fill="#b5dcff"/><path d="M342 15H345L347 11L350 19L353.5 9.5L355 15H357"/><rect x="372.5" y="8.5" width="18" height="12" rx="2" fill="#b5dcff"/><text x="381.5" y="17.2" font-family="'Liberation Sans',sans-serif" font-size="7.5" font-weight="bold" text-anchor="middle" fill="#1565a7" stroke="none">OK</text><ellipse cx="413.5" cy="14.5" rx="7" ry="6"/><circle cx="413.5" cy="8.5" r="2.2" fill="#b5dcff"/><circle cx="406" cy="14.5" r="2.2" fill="#b5dcff"/><circle cx="420.5" cy="14.5" r="2.2" fill="#b5dcff"/><path d="M439 6L442.5 12.5H435.5Z" fill="#b5dcff" stroke-width="1.1"/><circle cx="448.5" cy="9.5" r="3" fill="#b5dcff" stroke-width="1.1"/><path d="M439 16.5L442.5 19L441.2 22.8H436.8L435.5 19Z" fill="#b5dcff" stroke-width="1.1"/><rect x="445.5" y="17" width="6" height="5.5" rx="0.8" fill="#b5dcff" stroke-width="1.1"/><path d="M458 13.5H465L461.5 17.5Z" fill="#000" stroke="none"/></svg><div class="abs" style="left:542px;top:1px;width:29px;height:26px;background:#cfe2f5;border-left:1px solid #8a8a8a;border-top:1px solid #8a8a8a;border-right:1px solid #fff;border-bottom:1px solid #fff"></div><div class="tf" style="left:477.5px">M1</div><div class="tf" style="left:509.5px">M5</div><div class="tf" style="left:541px">M15</div><div class="tf" style="left:573.5px">H1</div><div class="tf" style="left:605.5px">H4</div><div class="tf" style="left:637.5px">D1</div><div class="tf" style="left:669.5px">W1</div><div class="tf" style="left:701.5px">MN</div></div>
<div id="oct"><svg width="50" height="14" viewBox="0 0 50 14" style="position:absolute;left:0;top:35px" fill="none"><rect x="7.5" y="2.5" width="14" height="10" rx="1" stroke="#e04a3a" fill="#fff"/><path d="M14.5 2.5h6a1 1 0 0 1 1 1v8a1 1 0 0 1-1 1h-6" stroke="#1e6eb8"/><path d="M9.5 5.5h4M9.5 7.5h4M9.5 9.5h4" stroke="#e04a3a"/><path d="M15.5 5.5h4M15.5 7.5h4M15.5 9.5h4" stroke="#1e6eb8"/><path d="M28.5 2.5h4l2 2v8h-6z" stroke="#e04a3a" fill="#fde0dc"/><path d="M36.5 5.5h3.5v-3h2.5v10h-6z" stroke="#1e6eb8" fill="#cfe6fa"/><path d="M33 2.5h6" stroke="#888"/></svg><div class="redtop" style="left:6px;top:53px;width:44px;height:23px;line-height:23px"><span style="display:inline-block;transform:scaleX(.83);margin-left:-1px">SELL</span></div><div class="abs" style="left:10px;top:75px;width:36px;height:1px;background:#8e0c0c"></div><div class="redtop" style="left:149px;top:53px;width:44px;height:23px;line-height:23px"><span style="display:inline-block;transform:scaleX(.83);margin-left:-3px">BUY</span></div><div class="abs" style="left:50px;top:53px;width:99px;height:23px;background:#fff"></div><div class="abs" style="left:52px;top:53px;width:95px;height:20px;background:#f3f3f3;border:1px solid #c9c9c9"></div><div class="abs" style="left:71px;top:53px;width:57px;height:20px;background:#fff;border:1px solid #a9a9b4;text-align:right;padding-right:3px;line-height:18px;font-size:12px;color:#1d4f91"><span style="display:inline-block;transform:scaleX(.9);transform-origin:right center">0.05</span></div><svg width="95" height="20" style="position:absolute;left:52px;top:53px"><path d="M6.5 8.5h6l-3 3.5z" fill="#111"/><path d="M82 11.5h6l-3 -3.5z" fill="#111"/></svg><div class="redbot" style="left:6px;top:76px;width:93px;height:34px"></div><div class="redbot" style="left:101px;top:76px;width:92px;height:34px"></div><div class="abs" style="left:153px;top:75px;width:36px;height:1px;background:#8e0c0c"></div><div class="abs" style="left:99px;top:76px;width:2px;height:34px;background:#fff"></div><div class="t" style="left:15px;top:95px;font-size:11px;font-weight:bold;color:#fff;letter-spacing:.7px">3962</div><div class="t" style="left:47px;top:78.5px;font-size:30.5px;color:#fff;letter-spacing:-1.6px">57</div><div class="t" style="left:82.5px;top:82px;font-size:11px;color:#fff">7</div><div class="t" style="left:110px;top:95px;font-size:11px;font-weight:bold;color:#fff;letter-spacing:.7px">3962</div><div class="t" style="left:142px;top:78.5px;font-size:30.5px;color:#fff;letter-spacing:-1.6px">68</div><div class="t" style="left:177.5px;top:82px;font-size:11px;color:#fff">9</div></div>
<div id="ctabs"><div class="abs" style="left:0;top:0;width:1px;height:20px;background:#888"></div><div class="ct" style="left:14px;transform:scaleX(0.884)">USDJPY,H4</div><div class="ct" style="left:95px;transform:scaleX(0.884)">USDJPY,H1</div><div class="ct" style="left:176px;transform:scaleX(0.897)">USDJPY,M15</div><div class="ct" style="left:265px;transform:scaleX(0.879)">EURUSD,H4</div><div class="ct" style="left:350px;transform:scaleX(0.879)">EURUSD,H1</div><div class="ct" style="left:435px;transform:scaleX(0.892)">EURUSD,M15</div><div class="ct" style="left:529px;transform:scaleX(0.868)">EURJPY,H4</div><div class="ct" style="left:610px;transform:scaleX(0.868)">EURJPY,H1</div><div class="ct" style="left:691px;transform:scaleX(0.883)">EURJPY,M15</div><div class="ct" style="left:778px;transform:scaleX(0.917)">XAUUSD,H4</div><div class="ct" style="left:863px;transform:scaleX(0.917)">XAUUSD,H1</div><div class="ct" style="left:948px;transform:scaleX(0.926)">XAUUSD,M15</div><div class="sep" style="left:83px;top:3px;height:14px"></div><div class="sep" style="left:164px;top:3px;height:14px"></div><div class="sep" style="left:253px;top:3px;height:14px"></div><div class="sep" style="left:338px;top:3px;height:14px"></div><div class="sep" style="left:423px;top:3px;height:14px"></div><div class="sep" style="left:516px;top:3px;height:14px"></div><div class="sep" style="left:597px;top:3px;height:14px"></div><div class="sep" style="left:678px;top:3px;height:14px"></div><div class="sep" style="left:767px;top:3px;height:14px"></div><div class="sep" style="left:852px;top:3px;height:14px"></div><div class="sep" style="left:937px;top:3px;height:14px"></div><div class="abs" style="left:1031px;top:-1px;width:92px;height:19px;background:#fff;border:1px solid #000;border-top:none;box-shadow:1px 1px 0 #888"></div><div class="ct" style="left:1041px;color:#000;transform:scaleX(0.926)">XAUUSD,M15</div><svg width="40" height="12" style="position:absolute;left:1875px;top:3px"><path d="M9 3v6l-3 -3z" fill="#b0b0b0"/><path d="M28 3v6l3 -3z" fill="#b0b0b0"/></svg></div>
<div id="term"><div id="side"></div><svg width="16" height="20" style="position:absolute;left:0;top:2px"><path d="M4.5 5.5l7 7M11.5 5.5l-7 7" stroke="#000" stroke-width="1.6"/></svg><div class="t" style="left:2px;top:161px;font-size:11.5px;transform:rotate(-90deg);transform-origin:left top;letter-spacing:-2.2px;height:12px;line-height:12px">ツールボックス</div><div class="row" style="top:0;height:24px"><div class="hcell" style="left:0px;width:160px;text-align:left;padding-left:7px;"><span style="display:inline-block;transform-origin:left center;transform:scaleX(0.970)">時間</span></div><div class="hcell" style="left:160px;width:154px;padding-right:27px;"><span style="display:inline-block;transform-origin:right center;transform:scaleX(0.999)">銘柄</span></div><div class="hcell" style="left:314px;width:119px;"><span style="display:inline-block;transform-origin:right center;transform:scaleX(0.714)">チケット</span></div><div class="hcell" style="left:433px;width:102px;"><span style="display:inline-block;transform-origin:right center;transform:scaleX(0.750)">タイプ</span></div><div class="hcell" style="left:535px;width:171px;"><span style="display:inline-block;transform-origin:right center;transform:scaleX(0.958)">数量</span></div><div class="hcell" style="left:706px;width:171px;"><span style="display:inline-block;transform-origin:right center;transform:scaleX(0.970)">価格</span></div><div class="hcell" style="left:877px;width:171px;"><span style="display:inline-block;transform-origin:right center;transform:scaleX(0.968)">決済逆指値(S/L)</span></div><div class="hcell" style="left:1048px;width:171px;"><span style="display:inline-block;transform-origin:right center;transform:scaleX(0.968)">決済指値(T/P)</span></div><div class="hcell" style="left:1219px;width:140px;"><span style="display:inline-block;transform-origin:right center;transform:scaleX(0.958)">時間</span></div><div class="hcell" style="left:1359px;width:171px;"><span style="display:inline-block;transform-origin:right center;transform:scaleX(0.945)">価格</span></div><div class="hcell" style="left:1530px;width:373px;border-right:none;"><span style="display:inline-block;transform-origin:right center;transform:scaleX(0.941)">損益</span></div><svg width="10" height="6" style="position:absolute;left:294px;top:9px"><path d="M1 5h7l-3.5 -4z" fill="#111"/></svg></div><div class="row" style="top:24px;background:#fff;border-bottom:1px solid #d4d4d4"><svg width="14" height="18" style="position:absolute;left:3px;top:1px"><rect x="1.5" y="1.5" width="10" height="15" rx="2" fill="#fff" stroke="#e2483c" stroke-width="1.2"/><path d="M5 6h3M5 9h3" stroke="#e2483c" stroke-width="1.2"/></svg><div class="cell" style="left:0px;width:160px;text-align:left;padding-left:21px;"><span style="transform-origin:left center;transform:scaleX(0.975)">2025.10.30 02:31:45</span></div><div class="cell" style="left:160px;width:154px;"><span style="transform-origin:right center;transform:scaleX(1.062)">xauusd</span></div><div class="cell" style="left:314px;width:119px;"><span style="transform-origin:right center;transform:scaleX(0.964)">1016100255</span></div><div class="cell" style="left:433px;width:102px;"><span style="transform-origin:right center;transform:scaleX(0.969)">sell</span></div><div class="cell" style="left:535px;width:171px;"><span style="transform-origin:right center;transform:scaleX(0.966)">0.05</span></div><div class="cell" style="left:706px;width:171px;"><span style="transform-origin:right center;transform:scaleX(0.965)">3933.504</span></div><div class="cell" style="left:877px;width:171px;background:#ff9e9e;"><span style="transform-origin:right center;transform:scaleX(0.965)">3939.141</span></div><div class="cell" style="left:1048px;width:171px;"><span style="transform-origin:right center;transform:scaleX(0.965)">3923.027</span></div><div class="cell" style="left:1219px;width:140px;"><span style="transform-origin:right center;transform:scaleX(0.975)">2025.10.30 02:33:41</span></div><div class="cell" style="left:1359px;width:171px;"><span style="transform-origin:right center;transform:scaleX(0.965)">3939.141</span></div><div class="cell" style="left:1530px;width:373px;border-right:none;color:#f02020;"><span style="transform-origin:right center;transform:scaleX(0.993)">-4 298</span></div></div><div class="row" style="top:44px;background:#ebebeb;border-bottom:1px solid #d4d4d4"><svg width="14" height="18" style="position:absolute;left:3px;top:1px"><rect x="1.5" y="1.5" width="10" height="15" rx="2" fill="#fff" stroke="#e2483c" stroke-width="1.2"/><path d="M5 6h3M5 9h3" stroke="#e2483c" stroke-width="1.2"/></svg><div class="cell" style="left:0px;width:160px;text-align:left;padding-left:21px;"><span style="transform-origin:left center;transform:scaleX(0.975)">2025.10.30 02:40:22</span></div><div class="cell" style="left:160px;width:154px;"><span style="transform-origin:right center;transform:scaleX(1.062)">xauusd</span></div><div class="cell" style="left:314px;width:119px;"><span style="transform-origin:right center;transform:scaleX(0.977)">1016114601</span></div><div class="cell" style="left:433px;width:102px;"><span style="transform-origin:right center;transform:scaleX(0.969)">sell</span></div><div class="cell" style="left:535px;width:171px;"><span style="transform-origin:right center;transform:scaleX(0.966)">0.05</span></div><div class="cell" style="left:706px;width:171px;"><span style="transform-origin:right center;transform:scaleX(0.965)">3939.663</span></div><div class="cell" style="left:877px;width:171px;"><span style="transform-origin:right center;transform:scaleX(0.965)">3942.291</span></div><div class="cell" style="left:1048px;width:171px;background:#58e658;"><span style="transform-origin:right center;transform:scaleX(0.965)">3936.831</span></div><div class="cell" style="left:1219px;width:140px;"><span style="transform-origin:right center;transform:scaleX(0.975)">2025.10.30 02:42:06</span></div><div class="cell" style="left:1359px;width:171px;"><span style="transform-origin:right center;transform:scaleX(0.965)">3936.831</span></div><div class="cell" style="left:1530px;width:373px;border-right:none;color:#2525f0;"><span style="transform-origin:right center;transform:scaleX(0.995)">2 159</span></div></div><div class="row" style="top:64px;background:#fff;border-bottom:1px solid #d4d4d4"><svg width="14" height="18" style="position:absolute;left:3px;top:1px"><rect x="1.5" y="1.5" width="10" height="15" rx="2" fill="#fff" stroke="#1e6eb8" stroke-width="1.2"/><path d="M5 6h3M5 9h3" stroke="#1e6eb8" stroke-width="1.2"/></svg><div class="cell" style="left:0px;width:160px;text-align:left;padding-left:21px;"><span style="transform-origin:left center;transform:scaleX(0.975)">2025.10.30 07:05:34</span></div><div class="cell" style="left:160px;width:154px;"><span style="transform-origin:right center;transform:scaleX(1.062)">xauusd</span></div><div class="cell" style="left:314px;width:119px;"><span style="transform-origin:right center;transform:scaleX(0.964)">1016690616</span></div><div class="cell" style="left:433px;width:102px;"><span style="transform-origin:right center;transform:scaleX(1.070)">buy</span></div><div class="cell" style="left:535px;width:171px;"><span style="transform-origin:right center;transform:scaleX(0.966)">0.05</span></div><div class="cell" style="left:706px;width:171px;"><span style="transform-origin:right center;transform:scaleX(0.965)">3972.572</span></div><div class="cell" style="left:877px;width:171px;background:#ff9e9e;"><span style="transform-origin:right center;transform:scaleX(0.965)">3970.198</span></div><div class="cell" style="left:1048px;width:171px;"><span style="transform-origin:right center;transform:scaleX(0.965)">4025.484</span></div><div class="cell" style="left:1219px;width:140px;"><span style="transform-origin:right center;transform:scaleX(0.975)">2025.10.30 07:07:57</span></div><div class="cell" style="left:1359px;width:171px;"><span style="transform-origin:right center;transform:scaleX(0.965)">3970.198</span></div><div class="cell" style="left:1530px;width:373px;border-right:none;color:#f02020;"><span style="transform-origin:right center;transform:scaleX(0.993)">-1 821</span></div></div><div class="row" style="top:84px;background:#ebebeb;border-bottom:1px solid #d4d4d4"><svg width="14" height="18" style="position:absolute;left:3px;top:1px"><rect x="1.5" y="1.5" width="10" height="15" rx="2" fill="#fff" stroke="#1e6eb8" stroke-width="1.2"/><path d="M5 6h3M5 9h3" stroke="#1e6eb8" stroke-width="1.2"/></svg><div class="cell" style="left:0px;width:160px;text-align:left;padding-left:21px;"><span style="transform-origin:left center;transform:scaleX(0.975)">2025.10.30 07:10:20</span></div><div class="cell" style="left:160px;width:154px;"><span style="transform-origin:right center;transform:scaleX(1.062)">xauusd</span></div><div class="cell" style="left:314px;width:119px;"><span style="transform-origin:right center;transform:scaleX(0.964)">1016699056</span></div><div class="cell" style="left:433px;width:102px;"><span style="transform-origin:right center;transform:scaleX(1.070)">buy</span></div><div class="cell" style="left:535px;width:171px;"><span style="transform-origin:right center;transform:scaleX(0.966)">0.05</span></div><div class="cell" style="left:706px;width:171px;"><span style="transform-origin:right center;transform:scaleX(0.965)">3972.040</span></div><div class="cell" style="left:877px;width:171px;background:#ff9e9e;"><span style="transform-origin:right center;transform:scaleX(0.965)">3972.184</span></div><div class="cell" style="left:1048px;width:171px;"><span style="transform-origin:right center;transform:scaleX(0.965)">4027.754</span></div><div class="cell" style="left:1219px;width:140px;"><span style="transform-origin:right center;transform:scaleX(0.983)">2025.10.30 07:11:41</span></div><div class="cell" style="left:1359px;width:171px;"><span style="transform-origin:right center;transform:scaleX(0.965)">3972.064</span></div><div class="cell" style="left:1530px;width:373px;border-right:none;color:#2525f0;"><span style="transform-origin:right center;transform:scaleX(0.963)">18</span></div></div><div class="row" style="top:104px;height:20px;background:#c8c8c8;font-weight:bold"><svg width="14" height="14" style="position:absolute;left:3px;top:3px"><circle cx="6.5" cy="7" r="5" fill="none" stroke="#111" stroke-width="1.2"/><path d="M4 7h5" stroke="#111" stroke-width="1.2"/></svg><div class="t" style="left:21px;top:0;line-height:21px;font-size:12px;transform:scaleX(.93);transform-origin:left center" >損益: -3 942&nbsp; クレジット: 0&nbsp; 入金: 0&nbsp; 出金: 0&nbsp; 残高: -3 942</div><div class="t" style="right:4px;top:0;line-height:21px;font-size:12px;transform:scaleX(.93);transform-origin:right center">-3 942</div></div><div class="abs" style="left:18px;top:139px;width:1902px;height:25px;background:#f0f0f0;border-top:1px solid #000"></div><div class="btab" style="left:33.5px;top:140px;transform-origin:left center;transform:scaleX(0.937)">取引</div><div class="btab" style="left:77.5px;top:140px;transform-origin:left center;transform:scaleX(0.979)">運用比率</div><div class="btab" style="left:213px;top:140px;transform-origin:left center;transform:scaleX(0.717)">ニュース</div><div class="btab" style="left:282px;top:140px;transform-origin:left center;transform:scaleX(0.816)">受信トレイ</div><div class="btab" style="left:361.5px;top:140px;transform-origin:left center;transform:scaleX(0.803)">指標カレンダー</div><div class="btab" style="left:449px;top:140px;transform-origin:left center;transform:scaleX(0.958)">会社</div><div class="btab" style="left:493px;top:140px;transform-origin:left center;transform:scaleX(0.687)">アラート</div><div class="btab" style="left:546.5px;top:140px;transform-origin:left center;transform:scaleX(0.958)">記事</div><div class="btab" style="left:590px;top:140px;transform-origin:left center;transform:scaleX(0.700)">ライブラリ</div><div class="btab" style="left:652px;top:140px;transform-origin:left center;transform:scaleX(0.740)">エキスパート</div><div class="btab" style="left:725px;top:140px;transform-origin:left center;transform:scaleX(0.875)">操作ログ</div><div class="sep" style="left:67px;top:143px;height:14px"></div><div class="sep" style="left:272px;top:143px;height:14px"></div><div class="sep" style="left:351px;top:143px;height:14px"></div><div class="sep" style="left:439px;top:143px;height:14px"></div><div class="sep" style="left:483px;top:143px;height:14px"></div><div class="sep" style="left:536px;top:143px;height:14px"></div><div class="sep" style="left:580px;top:143px;height:14px"></div><div class="sep" style="left:642px;top:143px;height:14px"></div><div class="sep" style="left:715px;top:143px;height:14px"></div><div class="abs" style="left:135px;top:139px;width:68px;height:21px;background:#fff;border:1px solid #000;border-top:none;box-shadow:1px 1px 0 #888"></div><div class="btab" style="left:145.5px;top:140px;color:#000;transform-origin:left center;transform:scaleX(0.979)">口座履歴</div><div class="t" style="left:248.5px;top:148.5px;font-size:9px;font-weight:bold;color:#e8323c">99</div><div class="t" style="left:333.5px;top:148.5px;font-size:9px;font-weight:bold;color:#e8323c">7</div><svg width="140" height="22" style="position:absolute;left:1680px;top:141px"><path d="M3 8h9l.8 10h-10.6z" fill="#f5c400"/><path d="M5 9V6.5a2.5 2.5 0 0 1 5 0V9" fill="none" stroke="#d9a800" stroke-width="1.2"/><circle cx="63" cy="11" r="1.5" fill="#2a78c2"/><path d="M59.5 8a4.5 4.5 0 0 0 0 6M66.5 8a4.5 4.5 0 0 1 0 6M57.5 6.5a7 7 0 0 0 0 9M68.5 6.5a7 7 0 0 1 0 9" fill="none" stroke="#2a78c2" stroke-width="1"/><path d="M127 16h8v-9a4 4 0 0 0-7 1a3.5 3.5 0 0 0-1 8z" fill="#cfe6fa" stroke="#2a78c2" stroke-width="1.2"/></svg><div class="t" style="left:1699px;top:145px;font-size:12px;color:#222">市場</div><div class="t" style="left:1755px;top:145px;font-size:12px;color:#222;letter-spacing:-3.2px">シグナル</div></div>
<div id="status"><div class="st" style="left:3px;font-size:12px;transform:scaleX(.8)">F1を押してヘルプを開く</div><div class="sep" style="left:1160px;top:3px;height:17px;background:#8a8a8a"></div><div class="sep" style="left:1263px;top:3px;height:17px;background:#8a8a8a"></div><div class="sep" style="left:1361px;top:3px;height:17px;background:#8a8a8a"></div><div class="sep" style="left:1447px;top:3px;height:17px;background:#8a8a8a"></div><div class="sep" style="left:1533px;top:3px;height:17px;background:#8a8a8a"></div><div class="sep" style="left:1619px;top:3px;height:17px;background:#8a8a8a"></div><div class="sep" style="left:1705px;top:3px;height:17px;background:#8a8a8a"></div><div class="sep" style="left:1800px;top:3px;height:17px;background:#8a8a8a"></div><div class="st" style="left:1166px;transform:scaleX(1.053)">atari3</div><div class="st" style="left:1269px;transform:scaleX(0.984)">2025.10.28 14:00</div><div class="st" style="left:1367.3px;transform:scaleX(0.981)">O: 3938.953</div><div class="st" style="left:1453.3px;transform:scaleX(1.001)">H: 3944.832</div><div class="st" style="left:1539px;transform:scaleX(0.993)">L: 3934.699</div><div class="st" style="left:1625px;transform:scaleX(0.973)">C: 3939.078</div><div class="st" style="left:1711px;transform:scaleX(1.028)">V: 0</div><svg width="12" height="14" style="position:absolute;left:1805px;top:6px"><rect x="1" y="9" width="2" height="3" fill="#1eb41e"/><rect x="4" y="7" width="2" height="5" fill="#1eb41e"/><rect x="7" y="4" width="2" height="8" fill="#1eb41e"/></svg></div>
<div class="abs" style="left:1813px;top:959px;width:107px;height:47px;background:#000;color:#fff;text-align:right;font-size:11px;padding-right:40px"><div style="height:15px;line-height:15px;letter-spacing:-.25px">16:40:38</div><div style="height:16px;line-height:16px;letter-spacing:.3px;margin-right:2px;font-size:11.5px">木曜日</div><div style="height:16px;line-height:17px;letter-spacing:.5px;margin-right:-.5px">2025/10/30</div></div>

</body></html>
